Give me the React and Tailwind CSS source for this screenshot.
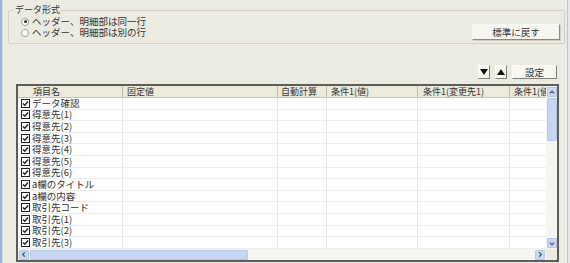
import React from "react";

const FONT = { fontFamily: '"Noto Sans CJK JP", "Noto Sans", sans-serif' };

const rows = [
  "データ確認",
  "得意先(1)",
  "得意先(2)",
  "得意先(3)",
  "得意先(4)",
  "得意先(5)",
  "得意先(6)",
  "a欄のタイトル",
  "a欄の内容",
  "取引先コード",
  "取引先(1)",
  "取引先(2)",
  "取引先(3)",
];

const cols = [
  { w: "w-[105px]", label: "項目名", cls: "pl-[15px]" },
  { w: "w-[155px]", label: "固定値", cls: "pl-[4px]" },
  { w: "w-[49px]", label: "自動計算", cls: "pl-[3px]" },
  { w: "w-[91px]", label: "条件1(値)", cls: "pl-[4px]" },
  { w: "w-[92px]", label: "条件1(変更先1)", cls: "pl-[5px]" },
  { w: "w-[60px]", label: "条件1(値2)", cls: "pl-[4px]" },
];

function Check() {
  return (
    <span className="w-[9px] h-[9px] border-[1.5px] border-[#222] bg-white flex items-center justify-center shrink-0">
      <svg width="7" height="7" viewBox="0 0 7 7">
        <path d="M1 3.5 L2.8 5.3 L6 1.5" fill="none" stroke="#222" strokeWidth="1.4" />
      </svg>
    </span>
  );
}

function Radio({ checked }) {
  return (
    <span className="w-[8px] h-[8px] rounded-full border border-[#a0a0a0] bg-white flex items-center justify-center shrink-0">
      {checked && <span className="w-[3px] h-[3px] rounded-full bg-[#333]" />}
    </span>
  );
}

function ScrollBtn({ dir }) {
  const paths = {
    up: "M2 5.5 L4.5 3 L7 5.5",
    down: "M2 3.5 L4.5 6 L7 3.5",
    left: "M5.5 2 L3 4.5 L5.5 7",
    right: "M3.5 2 L6 4.5 L3.5 7",
  };
  return (
    <div className="w-[10px] h-[10px] bg-[#c9d7f1] border border-[#b4c6ea] rounded-[1px] flex items-center justify-center shrink-0">
      <svg width="9" height="9" viewBox="0 0 9 9">
        <path d={paths[dir]} fill="none" stroke="#4d6185" strokeWidth="1.5" />
      </svg>
    </div>
  );
}

export default function App() {
  return (
    <div className="w-[570px] h-[263px] bg-[#ecebe1] flex overflow-hidden text-[#333]" style={FONT}>
      <div className="w-[3px] h-full flex">
        <div className="w-[2px] bg-[#9db5de]" />
        <div className="w-[1px] bg-[#d2dcec]" />
      </div>
      <div className="flex-1 flex flex-col">
        {/* group box */}
        <div className="mt-[10px] ml-[5px] w-[557px] h-[34px] border border-[#d3d1c5] rounded-[2px] relative flex justify-between">
          <span className="absolute left-[5px] top-[-7px] px-[1px] bg-[#ecebe1] text-[9px] leading-[12px]">データ形式</span>
          <div className="flex flex-col pt-[5px] pl-[12px]">
            <div className="h-[11px] flex items-center gap-[3px] text-[9.5px] leading-[11px]">
              <Radio checked />
              <span>ヘッダー、明細部は同一行</span>
            </div>
            <div className="h-[11px] flex items-center gap-[3px] text-[9.5px] leading-[11px]">
              <Radio />
              <span>ヘッダー、明細部は別の行</span>
            </div>
          </div>
          <div className="mt-[13px] mr-[4px] w-[88px] h-[16px] bg-[#f7f6f0] border border-[#f9f9f6] border-r-[#8a8a80] border-b-[#8a8a80] shadow-[1px_1px_0_#d0cec0] flex items-center justify-center text-[9.5px] leading-[12px]">
            標準に戻す
          </div>
        </div>

        {/* buttons row */}
        <div className="mt-[21px] pr-[10px] flex justify-end gap-[5px]">
          <div className="w-[12px] h-[14px] bg-[#f7f6f0] border border-[#fbfbf8] border-r-[#7e7e76] border-b-[#7e7e76] flex items-center justify-center">
            <svg width="8" height="6" viewBox="0 0 8 6"><path d="M0 0 H8 L4 6 Z" fill="#111" /></svg>
          </div>
          <div className="w-[12px] h-[14px] bg-[#f7f6f0] border border-[#fbfbf8] border-r-[#7e7e76] border-b-[#7e7e76] flex items-center justify-center">
            <svg width="8" height="6" viewBox="0 0 8 6"><path d="M0 6 H8 L4 0 Z" fill="#111" /></svg>
          </div>
          <div className="w-[45px] h-[14px] bg-[#f7f6f0] border border-[#fbfbf8] border-r-[#7e7e76] border-b-[#7e7e76] flex items-center justify-center text-[9.5px] leading-[12px]">
            設定
          </div>
        </div>

        {/* table */}
        <div className="mt-[5px] ml-[13px] w-[543px] h-[178px] border-2 border-[#5d5d5a] bg-white grid grid-cols-[528px_11px] grid-rows-[163px_11px]">
          <div className="overflow-hidden flex flex-col">
            <div className="h-[12px] flex bg-[#ebeadb] border-b border-[#c6c4b4] shrink-0">
              {cols.map((c, i) => (
                <div
                  key={i}
                  className={`${c.w} ${c.cls} shrink-0 h-full border-r border-[#bdbbac] text-[9px] leading-[11px] whitespace-nowrap`}
                >
                  {c.label}
                </div>
              ))}
            </div>
            {rows.map((r, ri) => (
              <div key={ri} className="h-[11.6px] flex border-b border-[#eeeeea] shrink-0">
                {cols.map((c, i) => (
                  <div key={i} className={`${c.w} shrink-0 h-full border-r border-[#e9e9e4] flex items-center`}>
                    {i === 0 && (
                      <div className="flex items-center gap-[2px] pl-[3px] text-[9.5px] leading-[11px] whitespace-nowrap">
                        <Check />
                        <span>{r}</span>
                      </div>
                    )}
                  </div>
                ))}
              </div>
            ))}
          </div>
          {/* vertical scrollbar */}
          <div className="bg-[#f5f5f1] flex flex-col items-center pt-[1px] pb-[1px]">
            <ScrollBtn dir="up" />
            <div className="w-[10px] h-[43px] mt-[1px] bg-[#c6d5f1] border border-[#b6c8ec] rounded-[1px]" />
            <div className="flex-1" />
            <ScrollBtn dir="down" />
          </div>
          {/* horizontal scrollbar */}
          <div className="bg-[#f5f5f1] flex items-center pl-[1px] pr-[1px]">
            <ScrollBtn dir="left" />
            <div className="w-[218px] h-[10px] ml-[1px] bg-[#c6d5f1] border border-[#b6c8ec] rounded-[1px]" />
            <div className="flex-1" />
            <ScrollBtn dir="right" />
          </div>
          <div className="bg-[#ecebe1]" />
        </div>
      </div>
      <div className="w-[3px] h-full flex">
        <div className="w-[1px] bg-[#bcc5d3]" />
        <div className="w-[2px] bg-[#e3e7ef]" />
      </div>
    </div>
  );
}
